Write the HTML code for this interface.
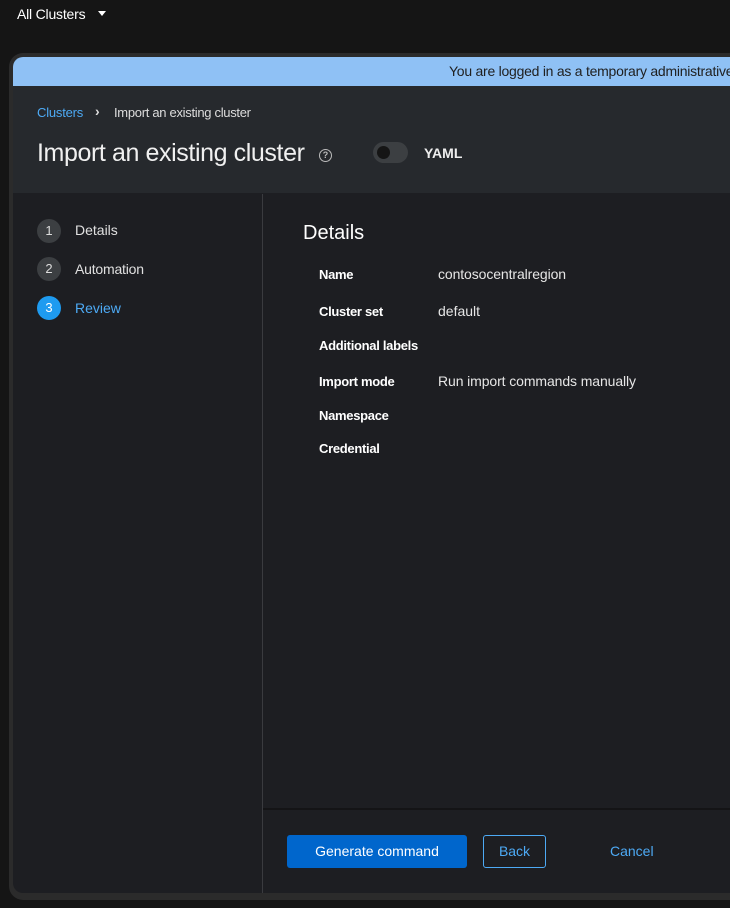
<!DOCTYPE html>
<html><head><style>
*{margin:0;padding:0;box-sizing:border-box}
body{width:730px;height:908px;background:#151515;font-family:"Liberation Sans",sans-serif;color:#e0e0e0;position:relative;overflow:hidden}
.a{position:absolute;white-space:nowrap}
</style></head><body>
<div class="a" style="left:17px;top:6px;font-size:14px;color:#fff;letter-spacing:-0.2px">All Clusters</div>
<div class="a" style="left:98px;top:11px;width:0;height:0;border-left:4.5px solid transparent;border-right:4.5px solid transparent;border-top:5px solid #fff"></div>
<div class="a" style="left:9px;top:53px;width:740px;height:847px;background:#2b2b2b;border-radius:14px"></div>
<div class="a" style="left:13px;top:57px;width:730px;height:836px;background:#1d1e22;border-radius:10px 0 0 10px;overflow:hidden">
  <div class="a" style="left:0;top:0;width:730px;height:29px;background:#8fc1f5"></div>
  <div class="a" style="left:436px;top:6px;font-size:14px;color:#1f1f1f;letter-spacing:-0.25px">You are logged in as a temporary administrative</div>
  <div class="a" style="left:0;top:29px;width:730px;height:107px;background:#26292d"></div>
  <div class="a" style="left:24px;top:48px;font-size:13px;color:#4daaf5;letter-spacing:-0.2px">Clusters</div>
  <div class="a" style="left:82px;top:46px;font-size:14px;font-weight:bold;color:#ddd">›</div>
  <div class="a" style="left:101px;top:48px;font-size:13px;color:#ddd;letter-spacing:-0.3px">Import an existing cluster</div>
  <div class="a" style="left:24px;top:82px;font-size:25px;color:#f0f0f0;letter-spacing:-0.4px">Import an existing cluster</div>
  <div class="a" style="left:306px;top:92px;width:13px;height:13px;border:1.5px solid #bbb;border-radius:50%;font-size:9px;color:#bbb;text-align:center;line-height:10px;font-weight:bold">?</div>
  <div class="a" style="left:360px;top:85px;width:35px;height:21px;background:#3c3f42;border-radius:11px"></div>
  <div class="a" style="left:364px;top:89px;width:13px;height:13px;background:#151515;border-radius:50%"></div>
  <div class="a" style="left:411px;top:88px;font-size:14px;font-weight:bold;color:#eee">YAML</div>
  <div class="a" style="left:249px;top:137px;width:1px;height:699px;background:#3a3b3f"></div>
  <div class="a" style="left:24px;top:162px;width:24px;height:24px;border-radius:50%;background:#3c3f42;color:#ddd;font-size:13px;text-align:center;line-height:24px">1</div>
  <div class="a" style="left:62px;top:165px;font-size:14px;color:#e0e0e0">Details</div>
  <div class="a" style="left:24px;top:200px;width:24px;height:24px;border-radius:50%;background:#3c3f42;color:#ddd;font-size:13px;text-align:center;line-height:24px">2</div>
  <div class="a" style="left:62px;top:204px;font-size:14px;color:#e0e0e0;letter-spacing:-0.2px">Automation</div>
  <div class="a" style="left:24px;top:239px;width:24px;height:24px;border-radius:50%;background:#1e9bf0;color:#fff;font-size:13px;text-align:center;line-height:24px">3</div>
  <div class="a" style="left:62px;top:243px;font-size:14px;color:#4daaf5">Review</div>
  <div class="a" style="left:290px;top:165px;font-size:20px;color:#fff">Details</div>
  <div class="a" style="left:306px;top:210px;font-size:13px;font-weight:bold;color:#fff;letter-spacing:-0.3px">Name</div>
  <div class="a" style="left:425px;top:209px;font-size:14px;color:#e6e6e6;letter-spacing:-0.1px">contosocentralregion</div>
  <div class="a" style="left:306px;top:247px;font-size:13px;font-weight:bold;color:#fff;letter-spacing:-0.3px">Cluster set</div>
  <div class="a" style="left:425px;top:246px;font-size:14px;color:#e6e6e6">default</div>
  <div class="a" style="left:306px;top:281px;font-size:13px;font-weight:bold;color:#fff;letter-spacing:-0.3px">Additional labels</div>
  <div class="a" style="left:306px;top:317px;font-size:13px;font-weight:bold;color:#fff;letter-spacing:-0.3px">Import mode</div>
  <div class="a" style="left:425px;top:316px;font-size:14px;color:#e6e6e6;letter-spacing:-0.1px">Run import commands manually</div>
  <div class="a" style="left:306px;top:351px;font-size:13px;font-weight:bold;color:#fff;letter-spacing:-0.3px">Namespace</div>
  <div class="a" style="left:306px;top:384px;font-size:13px;font-weight:bold;color:#fff;letter-spacing:-0.3px">Credential</div>
  <div class="a" style="left:250px;top:751px;width:480px;height:2px;background:#141416"></div>
  <div class="a" style="left:274px;top:778px;width:180px;height:33px;background:#0066cc;border-radius:3px;color:#fff;font-size:14px;text-align:center;line-height:33px">Generate command</div>
  <div class="a" style="left:470px;top:778px;width:63px;height:33px;border:1px solid #4daaf5;border-radius:3px;color:#4daaf5;font-size:14px;text-align:center;line-height:31px">Back</div>
  <div class="a" style="left:597px;top:786px;font-size:14px;color:#4daaf5">Cancel</div>
</div>
</body></html>
